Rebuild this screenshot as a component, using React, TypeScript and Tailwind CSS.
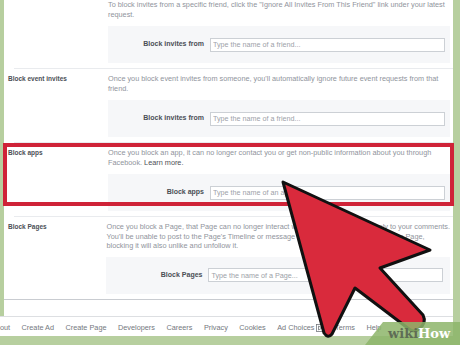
import React from "react";

const font = { fontFamily: '"Liberation Sans", Arial, sans-serif' };

function BlockBox({ label, placeholder }: { label: string; placeholder: string }) {
  return (
    <div className="mt-[6px] flex h-[37px] items-center bg-[#f6f7f9] pr-[5px]">
      <div className="w-[96px] text-right text-[7px] font-bold text-[#4b4f56]">{label}</div>
      <input
        readOnly
        placeholder={placeholder}
        className="ml-[6px] h-[14px] w-[235px] border border-[#ccd0d5] bg-white px-[2px] text-[7.2px] outline-none placeholder:text-[#9da1a8]"
      />
    </div>
  );
}

function Section({
  label,
  lines,
  box,
  last,
  first,
}: {
  label?: string;
  lines: React.ReactNode[];
  box: { label: string; placeholder: string };
  last?: boolean;
  first?: boolean;
}) {
  return (
    <div
      className={`flex pb-[5px] pl-[4px] ${first ? "pt-0" : "pt-[5px]"} ${
        last ? "border-b border-[#c9ccd1]" : ""
      }`}
    >
      <div className="w-[100px] text-[6.5px] leading-[10px] font-bold text-[#4b4f56]">{label}</div>
      <div className="flex-1 pr-[3px]">
        <div className={`text-[7.3px] text-[#90949c] ${last ? "leading-[9.6px]" : "leading-[10px]"}`}>
          {lines.map((l, i) => (
            <div key={i} className="whitespace-nowrap">
              {l}
            </div>
          ))}
        </div>
        <BlockBox {...box} />
      </div>
    </div>
  );
}

function Divider() {
  return <div className="ml-[10px] h-px bg-[#e9ebee]" />;
}

export default function App() {
  const links = ["About", "Create Ad", "Create Page", "Developers", "Careers", "Privacy", "Cookies", "Ad Choices", "Terms", "Help"];
  return (
    <div className="relative h-[345px] w-[460px] overflow-hidden bg-[#b7cf9f]" style={font}>
      <div className="ml-[4px] w-[449px] bg-white">
        <Section
          first
          lines={[
            'To block invites from a specific friend, click the "Ignore All Invites From This Friend" link under your latest',
            "request.",
          ]}
          box={{ label: "Block invites from", placeholder: "Type the name of a friend..." }}
        />
        <Divider />
        <Section
          label="Block event invites"
          lines={[
            "Once you block event invites from someone, you'll automatically ignore future event requests from that",
            "friend.",
          ]}
          box={{ label: "Block invites from", placeholder: "Type the name of a friend..." }}
        />
        <Divider />
        <Section
          label="Block apps"
          lines={[
            "Once you block an app, it can no longer contact you or get non-public information about you through",
            <>
              Facebook. <span className="text-[#4b4f56]">Learn more.</span>
            </>,
          ]}
          box={{ label: "Block apps", placeholder: "Type the name of an app..." }}
        />
        <Divider />
        <Section
          last
          label="Block Pages"
          lines={[
            "Once you block a Page, that Page can no longer interact with your posts or like or reply to your comments.",
            "You'll be unable to post to the Page's Timeline or message the Page. If you currently like the Page,",
            "blocking it will also unlike and unfollow it.",
          ]}
          box={{ label: "Block Pages", placeholder: "Type the name of a Page..." }}
        />
        <div className="h-[16px]" />
      </div>

      <div className="flex h-[20px] w-[453px] items-center border-t border-[#dddfe2] bg-white text-[7.3px] text-[#74787e]">
        <div className="-ml-[9px] flex items-center gap-[11.5px] pt-[4px] whitespace-nowrap">
          {links.map((l) => (
            <span key={l} className="flex items-center">
              {l}
              {l === "Ad Choices" && (
                <svg width="8" height="8" viewBox="0 0 8 8" className="ml-[1px]">
                  <rect x="0.5" y="0.5" width="7" height="7" fill="none" stroke="#74787e" strokeWidth="0.8" />
                  <path d="M2.5 2 L6 4 L2.5 6 Z" fill="none" stroke="#74787e" strokeWidth="0.8" />
                </svg>
              )}
            </span>
          ))}
        </div>
      </div>

      {/* red highlight box */}
      <div className="absolute left-[3px] top-[143px] h-[63px] w-[451px] border-[4px] border-[#cf2338]" />

      {/* arrow */}
      <svg className="absolute left-0 top-0" width="460" height="345" viewBox="0 0 460 345">
        <path
          d="M283 182 L430 250 L380 268 L423 315 Q427 323 419 329 Q414 333 409 329 L355 288 L332 334 Q328 339 324 333 Z"
          fill="#d92a3c"
          stroke="#111"
          strokeWidth="3"
          strokeLinejoin="round"
        />
      </svg>

      {/* wikiHow watermark */}
      <div className="absolute bottom-0 right-0 h-[23px] w-[95px]">
        <svg className="absolute inset-0" width="95" height="23" viewBox="0 0 95 23">
          <polygon points="18,0 95,0 95,23 0,23" fill="#8db56a" fillOpacity="0.85" />
        </svg>
        <div
          className="absolute left-[23px] top-[2px] flex text-[13px] leading-[20px] font-bold"
          style={{ fontFamily: '"DejaVu Serif", "Liberation Serif", serif' }}
        >
          <span className="text-[#5f6d55]">wiki</span>
          <span className="text-white">How</span>
        </div>
      </div>
    </div>
  );
}
